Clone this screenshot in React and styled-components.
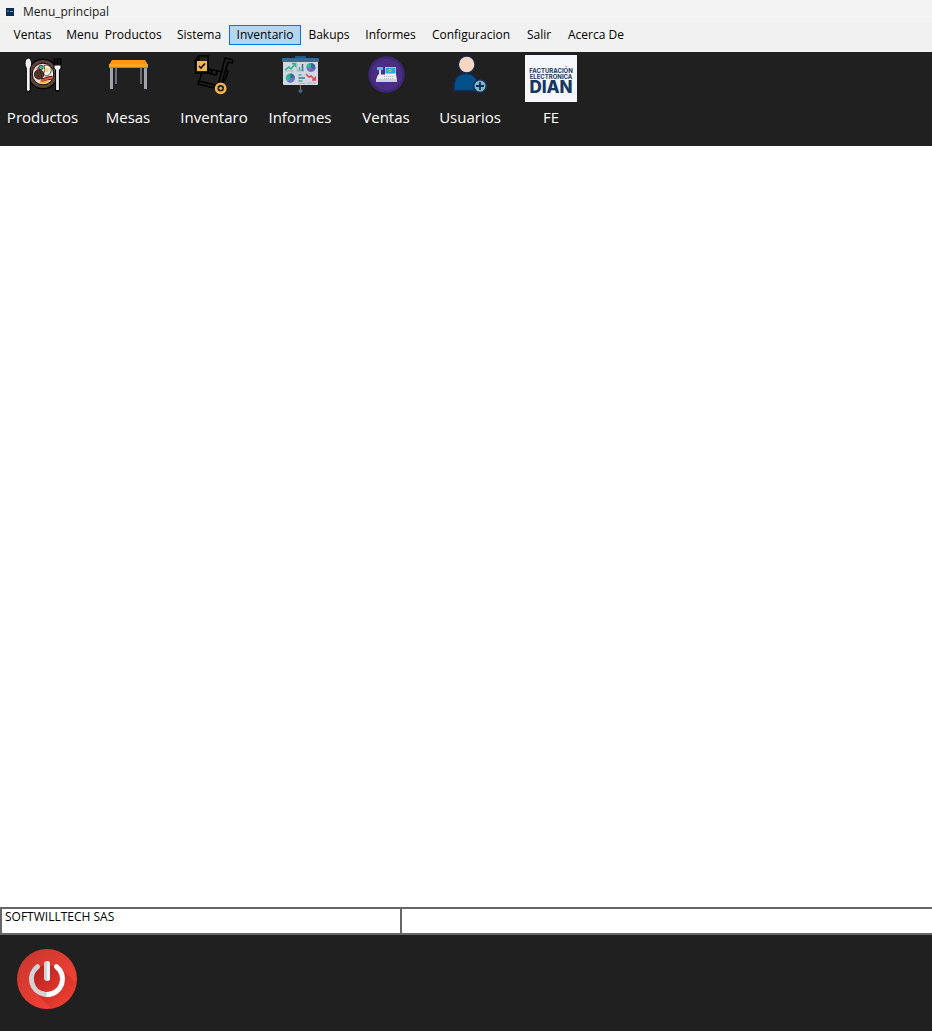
import React from "react";
import styled, { createGlobalStyle } from "styled-components";

const MENUS = [
  { label: "Ventas", width: 53 },
  { label: "Menu  Productos", width: 110 },
  { label: "Sistema", width: 60 },
  { label: "Inventario", width: 72, active: true },
  { label: "Bakups", width: 56 },
  { label: "Informes", width: 67 },
  { label: "Configuracion", width: 94 },
  { label: "Salir", width: 42 },
  { label: "Acerca De", width: 72 },
];

const TOOLS = [
  { label: "Productos", width: 85, Icon: PlateIcon },
  { label: "Mesas", width: 86, Icon: TableIcon },
  { label: "Inventaro", width: 86, Icon: DollyIcon },
  { label: "Informes", width: 86, Icon: BoardIcon },
  { label: "Ventas", width: 86, Icon: RegisterIcon },
  { label: "Usuarios", width: 82, Icon: UserIcon },
  { label: "FE", width: 80, Icon: DianLogo },
];

export default function App() {
  return (
    <Window>
      <GlobalStyle />
      <TitleBar>
        <AppIcon />
        <h1>Menu_principal</h1>
      </TitleBar>
      <MenuBar>
        {MENUS.map((menu) => (
          <MenuItem key={menu.label} $width={menu.width} $active={menu.active}>
            {menu.label}
          </MenuItem>
        ))}
      </MenuBar>
      <ToolBar>
        {TOOLS.map(({ label, width, Icon }) => (
          <ToolButton key={label} $width={width}>
            <IconSlot>
              <Icon />
            </IconSlot>
            {label}
          </ToolButton>
        ))}
      </ToolBar>
      <Workspace />
      <StatusBar>
        <StatusCell>SOFTWILLTECH SAS</StatusCell>
        <StatusCell />
      </StatusBar>
      <BottomBar>
        <PowerButton aria-label="Salir">
          <PowerIcon />
        </PowerButton>
      </BottomBar>
    </Window>
  );
}

function AppIcon() {
  return (
    <svg width="8" height="8" viewBox="0 0 8 8">
      <rect width="8" height="8" fill="#0c2d52" />
      <path d="M1 3h2M4 3.5h3" stroke="#6d9cc0" strokeWidth="1" />
    </svg>
  );
}

function PlateIcon() {
  return (
    <svg width="40" height="40" viewBox="0 0 40 40">
      <circle cx="20" cy="19" r="14.8" fill="#5d4037" stroke="#080808" strokeWidth="1.5" />
      <circle cx="20" cy="19" r="10.8" fill="#efdcd6" stroke="#080808" strokeWidth="1" />
      <path d="M13 14l4-4 2 3-3 3z" fill="#ef5a3c" />
      <circle cx="18" cy="12.5" r="2.2" fill="#35c39a" stroke="#111" strokeWidth=".6" />
      <path d="M21 10.5c6-2 9 4 6 8s-7 2-6-1 1-3 0-7z" fill="#fff8e8" stroke="#111" strokeWidth=".7" />
      <circle cx="24" cy="15" r="2.3" fill="#f7d774" />
      <circle cx="16" cy="19.5" r="4.6" fill="#5b352c" stroke="#111" strokeWidth=".9" />
      <path d="M14 18h1M17 18h1M15 21h1M18 21h1" stroke="#1d0f0c" strokeWidth="1" />
      <path d="M18 25c4 1 7-3 11-2" fill="none" stroke="#111" strokeWidth="4" />
      <path d="M18 25c4 1 7-3 11-2" fill="none" stroke="#ee4b3a" strokeWidth="2.2" />
      <path d="M17 27c4 2 7-2 9-1" fill="none" stroke="#f5b928" strokeWidth="2" />
      <path d="M5.3 13v21.5" stroke="#050505" strokeWidth="5" strokeLinecap="round" />
      <ellipse cx="5.3" cy="8.5" rx="3.3" ry="5.4" fill="#f1f4f5" stroke="#050505" strokeWidth="1" />
      <path d="M5.3 12v22.5" stroke="#f1f4f5" strokeWidth="2.8" strokeLinecap="round" />
      <path d="M31.5 3v10h6V3M34.5 3v10" fill="none" stroke="#050505" strokeWidth="2" />
      <path d="M34.5 14v20.5" stroke="#050505" strokeWidth="5" strokeLinecap="round" />
      <path d="M31.5 10.5h6v2.5l-1.6 2v20h-2.8V15l-1.6-2z" fill="#f1f4f5" />
    </svg>
  );
}

function TableIcon() {
  return (
    <svg width="40" height="40" viewBox="0 0 40 40">
      <path d="M7 12h2v17H7zM32 12h2v17h-2z" fill="#6c6c78" />
      <path d="M2 12h3v22H2zM36 12h3v22h-3z" fill="#a3a3ae" />
      <path d="M4 5h33l3 5v2H1v-2z" fill="#ff9811" />
      <path d="M1 9h39v4H1z" fill="#ffa51f" />
      <path d="M1 12h39v1H1z" fill="#d97b08" />
    </svg>
  );
}

function DollyIcon() {
  return (
    <svg width="40" height="40" viewBox="0 0 40 40" fill="none">
      <path d="M5 1h9v17H1.5V5z" stroke="#000" strokeWidth="1.5" strokeLinejoin="round" />
      <path d="M1.5 5H5V1" stroke="#000" strokeWidth="1.3" />
      <rect x="3" y="6" width="10" height="10" fill="#f0b651" />
      <path d="M5 11l2 2 4-4.5" stroke="#111" strokeWidth="1.7" />
      <g stroke="#000" strokeWidth="1.5" strokeLinejoin="round">
        <path d="M14 14l15 3M8 18l-3 8M15 14l-1 4 8 2 1-4M18 15l-1 4" />
        <path d="M5 26l16 4-1 3-16-4z" />
        <path d="M31 3l7 1.5c1 1 1 3 0 3.5l-4-1-6 21-3-1z" />
        <path d="M32 16h2l-2 7-3 4" />
      </g>
      <circle cx="26.7" cy="33.3" r="4.6" stroke="#f0b651" strokeWidth="2.6" />
      <circle cx="26.7" cy="33.3" r="1.5" fill="#f0b651" />
    </svg>
  );
}

function BoardIcon() {
  return (
    <svg width="40" height="40" viewBox="0 0 40 40">
      <path d="M20.5 30v5" stroke="#b5562a" strokeWidth="1.2" />
      <circle cx="20.5" cy="36" r="2" fill="#376b91" />
      <path d="M15 3V1h11v2z" fill="#29557a" />
      <rect x="3" y="5" width="35" height="25" rx="1" fill="#d3d7e3" />
      <rect x="2" y="3" width="37" height="4" rx="1" fill="#376b91" />
      <path d="M5 15l4-3 2 2 4-5M12 8.5h3.5V12" fill="none" stroke="#2fb98d" strokeWidth="1.6" />
      <path d="M5 16h9M17 9v7h7" fill="none" stroke="#aeb4c4" strokeWidth="1" />
      <path d="M19.5 12v4" stroke="#2fb98d" strokeWidth="1.5" />
      <path d="M22.5 9v7" stroke="#376b91" strokeWidth="1.5" />
      <circle cx="31" cy="12.5" r="4.6" fill="#7d6cd0" />
      <path d="M31 12.5V8a4.6 4.6 0 0 1 3.5 7z" fill="#376b91" />
      <path d="M31 12.5V8a4.6 4.6 0 0 0-4.5 5z" fill="#2fb98d" />
      <circle cx="10.3" cy="23" r="4.6" fill="#2fb98d" />
      <path d="M10.3 23v-4.6a4.6 4.6 0 0 1 4.6 4.6z" fill="#376b91" />
      <path d="M10.3 23h4.6a4.6 4.6 0 0 1-7 4z" fill="#7d6cd0" />
      <path d="M18.5 20h3M18.5 26h4" stroke="#2fb98d" strokeWidth="1.4" />
      <path d="M18.5 23h6.5" stroke="#376b91" strokeWidth="1.4" />
      <path d="M18.5 28.5h6.5M27 28h9" stroke="#aeb4c4" strokeWidth="1" />
      <path d="M26 19l3 3 2-1 4 4M35.3 21.5V25H32" fill="none" stroke="#dc4c4c" strokeWidth="1.6" />
    </svg>
  );
}

function RegisterIcon() {
  return (
    <svg width="40" height="40" viewBox="0 0 40 40">
      <circle cx="20.5" cy="19.5" r="18.3" fill="#3a2672" />
      <circle cx="20.5" cy="19.5" r="15.8" fill="#4b2e83" />
      <path d="M13 14h2v7h-2z" fill="#d5dce5" />
      <path d="M11 12h6v3h-6z" fill="#4fbce9" />
      <rect x="19" y="12" width="11" height="8" fill="#e8edf2" />
      <rect x="19.5" y="12.5" width="10" height="6" fill="#27a9e1" />
      <circle cx="24" cy="15.5" r="1.8" fill="#b9b545" />
      <path d="M12 19.5h18l1 5.5H10z" fill="#e9edf1" />
      <path d="M18 21.5h10M18 23.5h10" stroke="#b3bcc8" strokeWidth="1" strokeDasharray="1 1" />
      <path d="M10 24h21v3H10z" fill="#ccd2db" />
    </svg>
  );
}

function UserIcon() {
  return (
    <svg width="40" height="40" viewBox="0 0 40 40">
      <path
        d="M4 35.5v-4C4 22 10 18.5 16 18.5S28 23 28 31.5v4z"
        fill="#04518a"
        stroke="#152c5b"
        strokeWidth="1.5"
      />
      <circle cx="16.7" cy="9.5" r="8.3" fill="#f8d7c0" stroke="#152c5b" strokeWidth="1.3" />
      <circle cx="30" cy="31" r="6.3" fill="#7cbcc1" stroke="#152c5b" strokeWidth="1.5" />
      <path d="M30 27v8M26 31h8" stroke="#152c5b" strokeWidth="1.8" />
    </svg>
  );
}

function DianLogo() {
  return (
    <LogoBox>
      <small>FACTURACIÓN</small>
      <small>ELECTRÓNICA</small>
      <strong>DIAN</strong>
    </LogoBox>
  );
}

function PowerIcon() {
  return (
    <svg width="60" height="60" viewBox="0 0 60 60">
      <defs>
        <linearGradient id="disc" x1="0" y1="0" x2="1" y2="1">
          <stop offset="0" stopColor="#c5352e" />
          <stop offset="1" stopColor="#ff4436" />
        </linearGradient>
        <linearGradient id="shade" x1="0" y1="0" x2="1" y2="1">
          <stop offset="0" stopColor="#b01f1d" />
          <stop offset="1" stopColor="#e5392f" />
        </linearGradient>
        <linearGradient id="cast" x1="0" y1="0" x2="1" y2="1">
          <stop offset="0.3" stopColor="#b8241f" />
          <stop offset="0.9" stopColor="#b8241f" stopOpacity="0" />
        </linearGradient>
        <clipPath id="round">
          <circle cx="30" cy="30" r="30" />
        </clipPath>
      </defs>
      <circle cx="30" cy="30" r="30" fill="url(#disc)" />
      <path clipPath="url(#round)" d="M41 16l22 22v25H38L18 43z" fill="url(#cast)" opacity=".6" />
      <circle cx="30" cy="30" r="14" fill="url(#shade)" />
      <g fill="none" strokeLinecap="round" strokeWidth="5">
        <path d="M39.5 17.7A15.5 15.5 0 0 1 30 45.5" stroke="#fff" />
        <path d="M20.5 17.7A15.5 15.5 0 0 0 27.5 45.3" stroke="#d2d3d4" />
        <path d="M30 15v14" stroke="#d2d3d4" strokeWidth="6" />
      </g>
      <path d="M30 12a3 3 0 0 1 3 3v14a3 3 0 0 1-3 3z" fill="#f2f2f2" />
    </svg>
  );
}

const GlobalStyle = createGlobalStyle`
  * {
    box-sizing: border-box;
  }

  body {
    margin: 0;
    background: #fff;
    font-family: "Segoe UI", "Open Sans", "Noto Sans", sans-serif;
    font-size: 12px;
    color: #000;
  }

  button {
    padding: 0;
    border: none;
    background: none;
    font: inherit;
    color: inherit;
  }

  svg {
    display: block;
  }
`;

const Window = styled.main`
  display: flex;
  flex-direction: column;
  min-height: 100vh;
`;

const TitleBar = styled.header`
  display: flex;
  align-items: center;
  gap: 9px;
  height: 23px;
  padding-left: 6px;
  background: #f3f3f3;

  h1 {
    margin: 0;
    font-size: 12px;
    font-weight: 400;
    color: #1a1a1a;
  }
`;

const MenuBar = styled.nav`
  display: flex;
  height: 29px;
  padding: 2px 6px 7px;
  background: #f1f1f1;
`;

const MenuItem = styled.button`
  width: ${({ $width }) => $width}px;
  line-height: 16px;
  white-space: pre;
  border: 1px solid ${({ $active }) => ($active ? "#0078d7" : "transparent")};
  background: ${({ $active }) => ($active ? "#b3d7f3" : "transparent")};
`;

const ToolBar = styled.div`
  display: flex;
  height: 94px;
  padding-top: 3px;
  background: #202020;
`;

const ToolButton = styled.button`
  display: flex;
  flex-direction: column;
  align-items: center;
  width: ${({ $width }) => $width}px;
  font-size: 15px;
  line-height: 22px;
  color: #fff;
`;

const IconSlot = styled.span`
  height: 51px;
`;

const LogoBox = styled.span`
  display: flex;
  flex-direction: column;
  align-items: center;
  width: 52px;
  height: 47px;
  padding-top: 13px;
  background: #f5f7fa;
  font-family: Inter, sans-serif;
  color: #17375f;

  small {
    font-size: 6px;
    font-weight: 700;
    line-height: 6px;
  }

  strong {
    font-size: 17px;
    font-weight: 800;
    line-height: 15px;
  }
`;

const Workspace = styled.section`
  flex: 1;
  background: #fff;
`;

const StatusBar = styled.footer`
  display: grid;
  grid-template-columns: 398px 1fr;
  height: 28px;
  border: solid #666;
  border-width: 2px 0 2px 2px;
`;

const StatusCell = styled.div`
  padding-left: 3px;
  line-height: 16px;

  & + & {
    border-left: 2px solid #666;
  }
`;

const BottomBar = styled.div`
  height: 96px;
  padding: 14px 17px;
  background: #202020;
`;

const PowerButton = styled.button`
  border-radius: 50%;
`;
